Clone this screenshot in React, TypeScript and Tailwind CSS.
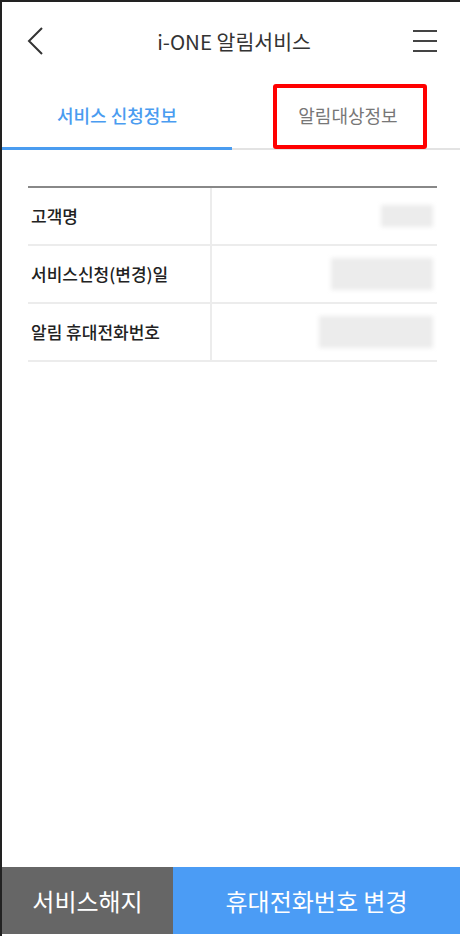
import React from 'react'

const rows = [
  { label: '고객명', blur: 'w-[52px] h-[22px]' },
  { label: '서비스신청(변경)일', blur: 'w-[102px] h-[32px]' },
  { label: '알림 휴대전화번호', blur: 'w-[114px] h-[32px]' },
]

export default function App() {
  return (
    <div
      className="w-[460px] h-[936px] bg-white border-l-2 border-t-2 border-[#222] flex flex-col relative"
      style={{ fontFamily: '"Noto Sans CJK KR", "Noto Sans", sans-serif' }}
    >
      {/* header */}
      <div className="h-[80px] flex items-center justify-between pl-[24px] pr-[22px]">
        <svg width="20" height="30" viewBox="0 0 20 30" className="-mt-[2px]">
          <path d="M16 2 L3 15 L16 28" stroke="#333" strokeWidth="2" fill="none" />
        </svg>
        <div className="text-[20.5px] text-[#333] -mt-[2px] ml-[10px]">i-ONE 알림서비스</div>
        <svg width="26" height="24" viewBox="0 0 26 24" className="-mt-[2px]">
          <path d="M1 2 H25 M1 12 H25 M1 22 H25" stroke="#444" strokeWidth="2" fill="none" />
        </svg>
      </div>

      {/* tabs */}
      <div className="flex h-[68px]">
        <div className="w-[230px] flex items-center justify-center border-b-[3px] border-[#4a9cf0] text-[18px] font-medium text-[#4a9cf0] pt-[1px]">
          서비스 신청정보
        </div>
        <div className="flex-1 flex items-start justify-center border-b-2 border-[#e3e3e3]">
          <div className="h-[66px] flex items-center justify-center text-[18px] text-[#777] ml-[4px]">
            알림대상정보
          </div>
        </div>
      </div>

      {/* table */}
      <div className="mt-[36px] ml-[26px] mr-[23px] border-t-2 border-[#888]">
        {rows.map((r) => (
          <div key={r.label} className="flex h-[58px] border-b-2 border-[#ececec]">
            <div className="w-[184px] border-r-2 border-[#ececec] flex items-center pl-[3px] text-[17px] font-medium text-[#222]">
              {r.label}
            </div>
            <div className="flex-1 flex items-center justify-end pr-[4px]">
              <div className={`${r.blur} bg-[#ececec] blur-[2px]`} />
            </div>
          </div>
        ))}
      </div>

      <div className="flex-1" />

      {/* bottom buttons */}
      <div className="flex h-[67px] mb-[2px]">
        <div className="w-[171px] bg-[#666] flex items-center justify-center text-[24px] text-white">
          서비스해지
        </div>
        <div className="flex-1 bg-[#4b9cf5] flex items-center justify-center text-[24px] text-white">
          휴대전화번호 변경
        </div>
      </div>

      {/* annotation box */}
      <div className="absolute left-[271px] top-[82px] w-[154px] h-[65px] border-[4px] border-[#ff0000] rounded-[3px]" />
    </div>
  )
}
